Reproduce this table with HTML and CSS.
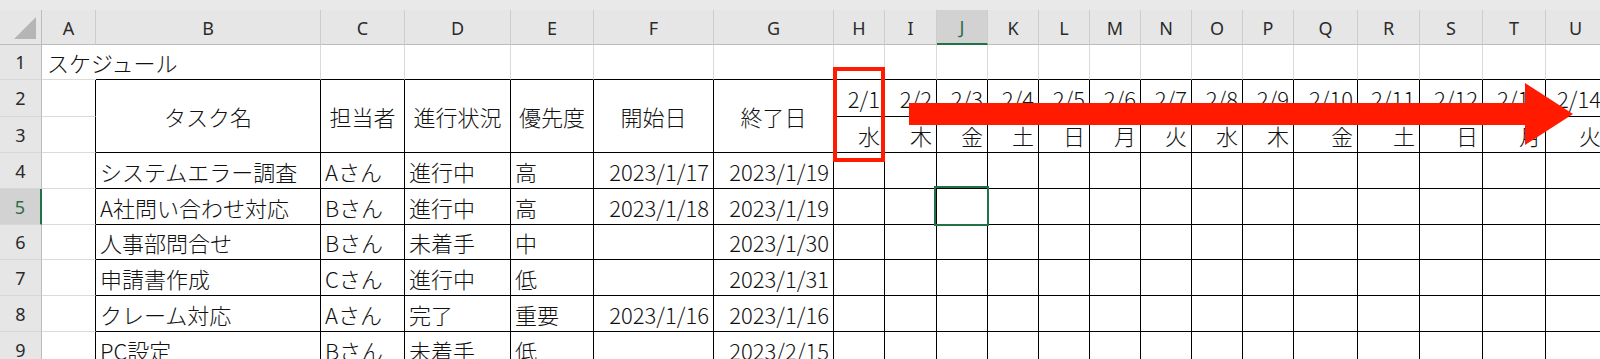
FILE: index.html
```html
<!DOCTYPE html>
<html lang="ja">
<head>
    <meta charset="UTF-8">
    <title>スケジュール</title>
    <link rel="stylesheet" href="styles.css">
</head>
<body>
    <div class="sheet">
        <div class="strip"></div>

        <!-- column letters -->
        <div class="corner"><span class="tri"></span></div>
        <div class="colhead">A</div>
        <div class="colhead">B</div>
        <div class="colhead">C</div>
        <div class="colhead">D</div>
        <div class="colhead">E</div>
        <div class="colhead">F</div>
        <div class="colhead">G</div>
        <div class="colhead">H</div>
        <div class="colhead">I</div>
        <div class="colhead active">J</div>
        <div class="colhead">K</div>
        <div class="colhead">L</div>
        <div class="colhead">M</div>
        <div class="colhead">N</div>
        <div class="colhead">O</div>
        <div class="colhead">P</div>
        <div class="colhead">Q</div>
        <div class="colhead">R</div>
        <div class="colhead">S</div>
        <div class="colhead">T</div>
        <div class="colhead">U</div>

        <!-- row 1 -->
        <div class="rowhead">1</div>
        <div class="cell title">スケジュール</div>
        <div class="cell above"></div>
        <div class="cell above"></div>
        <div class="cell above"></div>
        <div class="cell above"></div>
        <div class="cell above"></div>
        <div class="cell above"></div>
        <div class="cell above"></div>
        <div class="cell above"></div>
        <div class="cell above"></div>
        <div class="cell above"></div>
        <div class="cell above"></div>
        <div class="cell above"></div>
        <div class="cell above"></div>
        <div class="cell above"></div>
        <div class="cell above"></div>
        <div class="cell above"></div>
        <div class="cell above"></div>
        <div class="cell above"></div>
        <div class="cell above"></div>
        <div class="cell above"></div>

        <!-- rows 2-3: table heading -->
        <div class="rowhead">2</div>
        <div class="cell left"></div>
        <div class="cell t tall ctr">タスク名</div>
        <div class="cell t tall ctr">担当者</div>
        <div class="cell t tall ctr">進行状況</div>
        <div class="cell t tall ctr">優先度</div>
        <div class="cell t tall ctr">開始日</div>
        <div class="cell t tall ctr">終了日</div>
        <div class="cell t r">2/1</div>
        <div class="cell t r">2/2</div>
        <div class="cell t r">2/3</div>
        <div class="cell t r">2/4</div>
        <div class="cell t r">2/5</div>
        <div class="cell t r">2/6</div>
        <div class="cell t r">2/7</div>
        <div class="cell t r">2/8</div>
        <div class="cell t r">2/9</div>
        <div class="cell t r">2/10</div>
        <div class="cell t r">2/11</div>
        <div class="cell t r">2/12</div>
        <div class="cell t r">2/13</div>
        <div class="cell t r">2/14</div>

        <div class="rowhead">3</div>
        <div class="cell left"></div>
        <div class="cell t r">水</div>
        <div class="cell t r">木</div>
        <div class="cell t r">金</div>
        <div class="cell t r">土</div>
        <div class="cell t r">日</div>
        <div class="cell t r">月</div>
        <div class="cell t r">火</div>
        <div class="cell t r">水</div>
        <div class="cell t r">木</div>
        <div class="cell t r">金</div>
        <div class="cell t r">土</div>
        <div class="cell t r">日</div>
        <div class="cell t r">月</div>
        <div class="cell t r">火</div>

        <!-- row 4 -->
        <div class="rowhead">4</div>
        <div class="cell left"></div>
        <div class="cell t">システムエラー調査</div>
        <div class="cell t">Aさん</div>
        <div class="cell t">進行中</div>
        <div class="cell t">高</div>
        <div class="cell t r">2023/1/17</div>
        <div class="cell t r">2023/1/19</div>
        <div class="cell t"></div><div class="cell t"></div><div class="cell t"></div><div class="cell t"></div><div class="cell t"></div><div class="cell t"></div><div class="cell t"></div>
        <div class="cell t"></div><div class="cell t"></div><div class="cell t"></div><div class="cell t"></div><div class="cell t"></div><div class="cell t"></div><div class="cell t"></div>

        <!-- row 5 -->
        <div class="rowhead active">5</div>
        <div class="cell left"></div>
        <div class="cell t">A社問い合わせ対応</div>
        <div class="cell t">Bさん</div>
        <div class="cell t">進行中</div>
        <div class="cell t">高</div>
        <div class="cell t r">2023/1/18</div>
        <div class="cell t r">2023/1/19</div>
        <div class="cell t"></div><div class="cell t"></div><div class="cell t sel"></div><div class="cell t"></div><div class="cell t"></div><div class="cell t"></div><div class="cell t"></div>
        <div class="cell t"></div><div class="cell t"></div><div class="cell t"></div><div class="cell t"></div><div class="cell t"></div><div class="cell t"></div><div class="cell t"></div>

        <!-- row 6 -->
        <div class="rowhead">6</div>
        <div class="cell left"></div>
        <div class="cell t">人事部問合せ</div>
        <div class="cell t">Bさん</div>
        <div class="cell t">未着手</div>
        <div class="cell t">中</div>
        <div class="cell t r"></div>
        <div class="cell t r">2023/1/30</div>
        <div class="cell t"></div><div class="cell t"></div><div class="cell t"></div><div class="cell t"></div><div class="cell t"></div><div class="cell t"></div><div class="cell t"></div>
        <div class="cell t"></div><div class="cell t"></div><div class="cell t"></div><div class="cell t"></div><div class="cell t"></div><div class="cell t"></div><div class="cell t"></div>

        <!-- row 7 -->
        <div class="rowhead">7</div>
        <div class="cell left"></div>
        <div class="cell t">申請書作成</div>
        <div class="cell t">Cさん</div>
        <div class="cell t">進行中</div>
        <div class="cell t">低</div>
        <div class="cell t r"></div>
        <div class="cell t r">2023/1/31</div>
        <div class="cell t"></div><div class="cell t"></div><div class="cell t"></div><div class="cell t"></div><div class="cell t"></div><div class="cell t"></div><div class="cell t"></div>
        <div class="cell t"></div><div class="cell t"></div><div class="cell t"></div><div class="cell t"></div><div class="cell t"></div><div class="cell t"></div><div class="cell t"></div>

        <!-- row 8 -->
        <div class="rowhead">8</div>
        <div class="cell left"></div>
        <div class="cell t">クレーム対応</div>
        <div class="cell t">Aさん</div>
        <div class="cell t">完了</div>
        <div class="cell t">重要</div>
        <div class="cell t r">2023/1/16</div>
        <div class="cell t r">2023/1/16</div>
        <div class="cell t"></div><div class="cell t"></div><div class="cell t"></div><div class="cell t"></div><div class="cell t"></div><div class="cell t"></div><div class="cell t"></div>
        <div class="cell t"></div><div class="cell t"></div><div class="cell t"></div><div class="cell t"></div><div class="cell t"></div><div class="cell t"></div><div class="cell t"></div>

        <!-- row 9 -->
        <div class="rowhead">9</div>
        <div class="cell left"></div>
        <div class="cell t">PC設定</div>
        <div class="cell t">Bさん</div>
        <div class="cell t">未着手</div>
        <div class="cell t">低</div>
        <div class="cell t r"></div>
        <div class="cell t r">2023/2/15</div>
        <div class="cell t"></div><div class="cell t"></div><div class="cell t"></div><div class="cell t"></div><div class="cell t"></div><div class="cell t"></div><div class="cell t"></div>
        <div class="cell t"></div><div class="cell t"></div><div class="cell t"></div><div class="cell t"></div><div class="cell t"></div><div class="cell t"></div><div class="cell t"></div>

        <!-- annotations drawn on top of the sheet -->
        <div class="mark"></div>
        <svg class="arrow" width="1600" height="359" viewBox="0 0 1600 359">
            <rect x="909" y="103" width="618" height="22" fill="#ff1a00"/>
            <polygon points="1525,83 1573,114 1525,145" fill="#ff1a00"/>
        </svg>
    </div>
</body>
</html>
```

FILE: styles.css
```css
body {
    margin: 0;
    background: #fff;
    overflow: hidden;
    font-family: "Noto Sans CJK JP", sans-serif;
}

.sheet {
    position: relative;
    width: 1606px;
    display: grid;
    grid-template-columns: 42px 54px 225px 84px 106px 83px 120px 120px 51px 52px 51px 51px 51px 51px 51px 51px 51px 64px 62px 63px 63px 60px;
    grid-template-rows: 10px 35px 35px 37px 36px 36px 36px 35px 36px 36px 36px;
}

.strip {
    grid-column: 1 / -1;
    background: #e9e9e9;
}

/* headers */
.corner, .colhead, .rowhead {
    background: #e6e6e6;
    box-sizing: border-box;
    display: flex;
    align-items: center;
    justify-content: center;
    font-family: "Noto Sans", "Liberation Sans", sans-serif;
    font-size: 18px;
    color: #2b2b2b;
}

.corner {
    position: relative;
    border-right: 1px solid #bcbcbc;
    border-bottom: 1px solid #bcbcbc;
}

.corner .tri {
    position: absolute;
    right: 5px;
    bottom: 5px;
    width: 0;
    height: 0;
    border-left: 22px solid transparent;
    border-bottom: 22px solid #b5b5b5;
}

.colhead {
    border-right: 1px solid #cdcdcd;
    border-bottom: 1px solid #bcbcbc;
    padding-top: 1px;
}

.rowhead {
    border-right: 1px solid #bcbcbc;
    border-bottom: 1px solid #d6d6d6;
}

.colhead.active {
    background: #d2d2d2;
    color: #2f6b48;
    border-bottom: 2px solid #217346;
}

.rowhead.active {
    background: #d2d2d2;
    color: #2f6b48;
    border-right: 2px solid #217346;
}

/* cells */
.cell {
    box-sizing: border-box;
    border-right: 1px solid #dadada;
    border-bottom: 1px solid #dadada;
    padding: 0 4px 0 4px;
    display: flex;
    align-items: center;
    white-space: nowrap;
    font-size: 22px;
    font-weight: 300;
    color: #111;
}

.title {
    border-right: none;
    padding-left: 5px;
    overflow: visible;
}

.above {
    border-bottom-color: #000;
}

.left {
    border-right-color: #000;
}

.t {
    border-right-color: #000;
    border-bottom-color: #000;
}

.tall {
    grid-row: span 2;
}

.ctr {
    justify-content: center;
}

.r {
    justify-content: flex-end;
}

.sel {
    position: relative;
}

.sel::after {
    content: "";
    position: absolute;
    left: -3px;
    top: -3px;
    right: -2px;
    bottom: -2px;
    border: 2px solid #217346;
}

/* red callouts */
.mark {
    position: absolute;
    left: 833px;
    top: 67px;
    width: 52px;
    height: 95px;
    box-sizing: border-box;
    border: 4px solid #ff1a00;
}

.arrow {
    position: absolute;
    left: 0;
    top: 0;
}
```
